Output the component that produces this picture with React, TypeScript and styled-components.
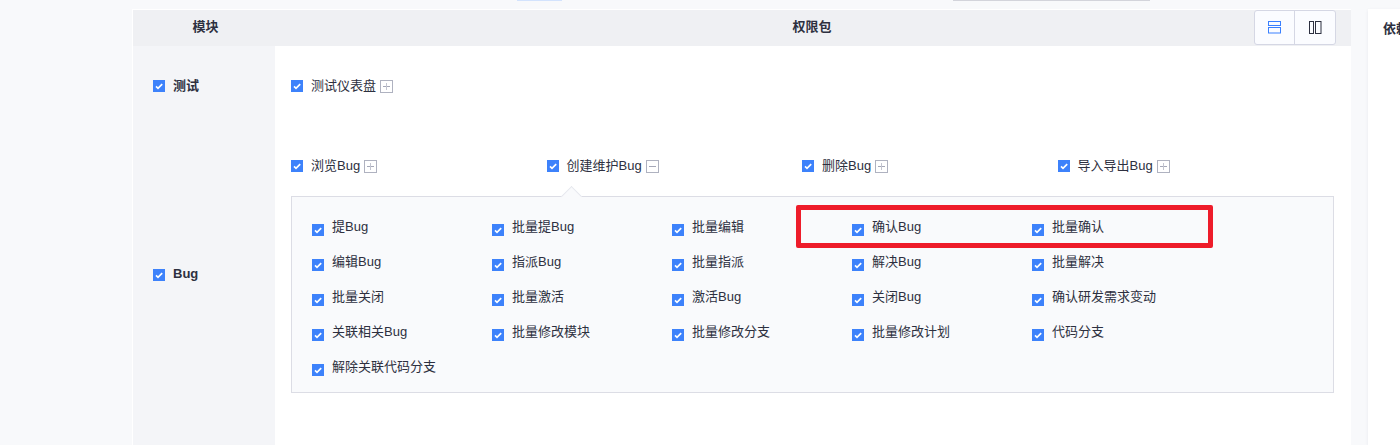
import React from "react";
import styled, { createGlobalStyle } from "styled-components";

const GlobalStyle = createGlobalStyle`
  html, body {
    margin: 0;
    padding: 0;
    height: 445px;
    overflow: hidden;
    background: #f8f9fb;
  }
  body {
    font-family: "Liberation Sans", "Noto Sans CJK SC", sans-serif;
    font-size: 13px;
    color: #2d3040;
  }
`;

const mainPackages = ["浏览Bug", "创建维护Bug", "删除Bug", "导入导出Bug"];

const subPackages = [
  "提Bug", "批量提Bug", "批量编辑", "确认Bug", "批量确认",
  "编辑Bug", "指派Bug", "批量指派", "解决Bug", "批量解决",
  "批量关闭", "批量激活", "激活Bug", "关闭Bug", "确认研发需求变动",
  "关联相关Bug", "批量修改模块", "批量修改分支", "批量修改计划", "代码分支",
  "解除关联代码分支",
];

function Check() {
  return (
    <CheckBox>
      <svg width="12" height="12" viewBox="0 0 12 12" fill="none">
        <path d="M3 6.4 L5 8.3 L9.2 4.2" stroke="#fff" strokeWidth="1.7" />
      </svg>
    </CheckBox>
  );
}

function Expander({ open }: { open?: boolean }) {
  return (
    <ExpandBox>
      <svg width="11" height="11" viewBox="0 0 11 11" fill="none">
        <path d="M2 5.5 H9" stroke="#a5a8b8" />
        {!open && <path d="M5.5 2 V9" stroke="#c3c5d0" />}
      </svg>
    </ExpandBox>
  );
}

export default function App() {
  return (
    <>
      <GlobalStyle />
      <Page>
        <TopStub>
          <TabStub />
          <InputStub />
        </TopStub>
        <Columns>
          <Main>
            <HeaderRow>
              <ModuleHead>模块</ModuleHead>
              <PackageHead>权限包</PackageHead>
              <Toggle>
                <ToggleBtn>
                  <svg width="13" height="13" viewBox="0 0 13 13" fill="none" stroke="#3a80ff">
                    <rect x="0.5" y="0.5" width="12" height="4" />
                    <rect x="0.5" y="6.5" width="12" height="5.5" />
                  </svg>
                </ToggleBtn>
                <ToggleBtn>
                  <svg width="13" height="13" viewBox="0 0 13 13" fill="none" stroke="#2d3040">
                    <rect x="0.5" y="0.5" width="4" height="12" />
                    <rect x="6.5" y="0.5" width="5.5" height="12" />
                  </svg>
                </ToggleBtn>
              </Toggle>
            </HeaderRow>

            <ModuleRow>
              <ModuleCell>
                <Check />
                <ModuleName>测试</ModuleName>
              </ModuleCell>
              <PackageCell>
                <PackageGrid>
                  <PackageItem>
                    <Check />
                    <PackageName>测试仪表盘</PackageName>
                    <Expander />
                  </PackageItem>
                </PackageGrid>
              </PackageCell>
            </ModuleRow>

            <ModuleRow>
              <ModuleCell>
                <Check />
                <ModuleName>Bug</ModuleName>
              </ModuleCell>
              <PackageCell>
                <PackageGrid>
                  {mainPackages.map((name, i) => (
                    <PackageItem key={name}>
                      <Check />
                      <PackageName>{name}</PackageName>
                      <Expander open={i === 1} />
                    </PackageItem>
                  ))}
                </PackageGrid>
                <SubPanel>
                  <Arrow />
                  <Highlight />
                  {subPackages.map((name) => (
                    <SubItem key={name}>
                      <Check />
                      <SubName>{name}</SubName>
                    </SubItem>
                  ))}
                </SubPanel>
              </PackageCell>
            </ModuleRow>

            <ModuleRow>
              <ModuleCell />
              <PackageCell />
            </ModuleRow>
          </Main>

          <Side>
            <SideCard>
              <SideTitle>依赖权限</SideTitle>
            </SideCard>
            <SideCard />
          </Side>
        </Columns>
      </Page>
    </>
  );
}

const Page = styled.div`
  height: 445px;
  overflow: hidden;
`;

const TopStub = styled.div`
  display: flex;
  height: 9px;
  padding-left: 517px;
`;

const TabStub = styled.div`
  width: 45px;
  height: 1px;
  background: #d3e3fd;
`;

const InputStub = styled.div`
  width: 197px;
  height: 1px;
  margin-left: 391px;
  background: #d3d4db;
`;

const Columns = styled.div`
  display: flex;
  align-items: flex-start;
  gap: 17px;
  padding-left: 132px;
`;

const Main = styled.div`
  position: relative;
  flex: none;
  width: 1218px;
  padding: 1px 0 0 1px;
  background: #fff;
`;

const HeaderRow = styled.div`
  display: grid;
  grid-template-columns: 142px 1fr;
  height: 36px;
  line-height: 34px;
  background: #eff0f3;
  font-weight: 700;
`;

const ModuleHead = styled.div`
  padding-left: 3px;
  text-align: center;
`;

const PackageHead = styled.div`
  padding-right: 2px;
  text-align: center;
`;

const Toggle = styled.div`
  position: absolute;
  top: 1px;
  right: 15px;
  display: flex;
  height: 33px;
  border: 1px solid #d5d7e4;
  border-radius: 3px;
  background: #fbfcff;
`;

const ToggleBtn = styled.div`
  display: flex;
  align-items: center;
  justify-content: center;
  width: 39px;
  & + & {
    width: 40px;
    border-left: 1px solid #d5d7e4;
  }
`;

const ModuleRow = styled.div`
  display: grid;
  grid-template-columns: 142px 1fr;
`;

const ModuleCell = styled.div`
  display: flex;
  align-items: center;
  gap: 8px;
  padding-left: 20px;
  background: #f4f5f8;
`;

const ModuleName = styled.span`
  margin-bottom: 3px;
  font-weight: 700;
`;

const PackageCell = styled.div`
  padding: 25px 17px 25px 16px;
`;

const PackageGrid = styled.div`
  display: grid;
  grid-template-columns: repeat(4, 255.5px);
`;

const PackageItem = styled.div`
  display: flex;
  align-items: center;
  height: 30px;
  gap: 4px;
`;

const PackageName = styled.span`
  margin: 0 0 4px 4px;
`;

const CheckBox = styled.span`
  flex: none;
  display: block;
  width: 12px;
  height: 12px;
  background: #3d82fb;
  svg {
    display: block;
  }
`;

const ExpandBox = styled.span`
  flex: none;
  display: block;
  width: 11px;
  height: 11px;
  border: 1px solid #afb2c0;
  svg {
    display: block;
  }
`;

const SubPanel = styled.div`
  position: relative;
  display: grid;
  grid-template-columns: repeat(5, 180px);
  grid-auto-rows: 35px;
  margin: 15px 0 5px;
  padding: 14px 20px 6px;
  border: 1px solid #dcdde5;
  background: #f9fafc;
`;

const Arrow = styled.div`
  position: absolute;
  top: -8px;
  left: 272px;
  width: 14px;
  height: 14px;
  border-top: 1px solid #e6e7ed;
  border-left: 1px solid #e6e7ed;
  background: #f9fafc;
  transform: rotate(45deg);
`;

const Highlight = styled.div`
  position: absolute;
  top: 8px;
  left: 504px;
  width: 407px;
  height: 33px;
  border: 5px solid #ee1c2a;
  border-radius: 2px;
`;

const SubItem = styled.div`
  display: flex;
  align-items: center;
  gap: 8px;
  ${CheckBox} {
    margin-top: 2px;
  }
`;

const SubName = styled.span`
  margin-bottom: 6px;
`;

const Side = styled.div`
  flex: none;
  display: flex;
  flex-direction: column;
  gap: 16px;
  width: 300px;
`;

const SideCard = styled.div`
  height: 414px;
  padding: 11px 15px;
  background: #fff;
  box-shadow: 0 1px 3px rgba(60, 64, 90, 0.08);
`;

const SideTitle = styled.div`
  font-weight: 700;
  line-height: 18px;
`;
